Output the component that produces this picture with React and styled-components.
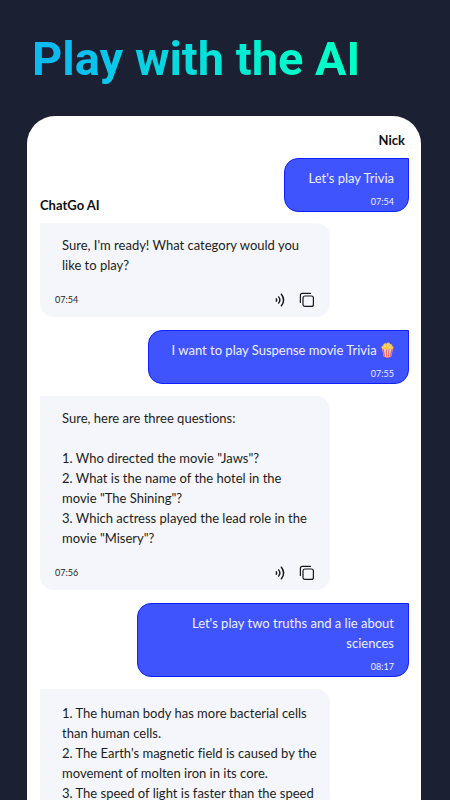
import React from 'react';
import styled, { createGlobalStyle } from 'styled-components';

const GlobalStyle = createGlobalStyle`
  * {
    box-sizing: border-box;
  }

  body {
    margin: 0;
    background: #1b2132;
    font-family: Lato, "Liberation Sans", sans-serif;
    font-variant-ligatures: none;
  }
`;

const Page = styled.div`
  display: flex;
  flex-direction: column;
  height: 100vh;
  padding: 31px 29px 0 27px;
  overflow: hidden;
`;

const Title = styled.h1`
  align-self: flex-start;
  margin: 0 0 29px 5px;
  font-family: Roboto, sans-serif;
  font-size: 47px;
  font-weight: 700;
  line-height: 56px;
  white-space: nowrap;
  color: transparent;
  background: linear-gradient(100deg, #0cbaf2 10%, #00ffc8 85%);
  background-clip: text;
`;

const Chat = styled.main`
  flex: 1;
  min-height: 0;
  display: flex;
  flex-direction: column;
  padding: 15px 12px 0 13px;
  border-radius: 28px 28px 0 0;
  background: #ffffff;
  overflow: hidden;
`;

const Author = styled.span`
  align-self: ${({ $mine }) => ($mine ? 'flex-end' : 'flex-start')};
  margin: ${({ $mine }) => ($mine ? '0 4px 9px 0' : '-28px 0 9px')};
  font-size: 13px;
  font-weight: 700;
  line-height: 18px;
  color: #101014;
`;

const Text = styled.p`
  margin: 0;
  font-size: 13px;
  line-height: 20px;
  white-space: pre-line;
`;

const Time = styled.time`
  font-size: 9px;
  line-height: 16px;
`;

const Sent = styled.article`
  flex-shrink: 0;
  align-self: flex-end;
  display: flex;
  flex-direction: column;
  align-items: flex-end;
  gap: 6px;
  max-width: 272px;
  margin-bottom: 12px;
  padding: 9px 14px 1px 23px;
  border: 1px solid #0f20ff;
  border-radius: 14px 0 14px 14px;
  background: #4054fd;
  color: #eef0ff;
  text-align: right;
`;

const Received = styled.article`
  flex-shrink: 0;
  width: 290px;
  max-width: 100%;
  margin-bottom: 13px;
  padding: ${({ $roomy }) => ($roomy ? '14px 8px 7px 22px' : '12px 15px 7px 22px')};
  border-radius: 0 14px 14px 14px;
  background: #f5f6fb;
  color: #1c1d22;
`;

const Footer = styled.footer`
  display: flex;
  align-items: center;
  height: 20px;
  margin: 15px 0 0 -7px;
`;

const Actions = styled.div`
  display: flex;
  gap: 12px;
  margin-left: auto;
`;

const IconButton = styled.button`
  display: flex;
  padding: 0;
  border: 0;
  background: none;
  color: #17181c;
  cursor: pointer;
`;

const Emoji = styled.svg`
  display: inline-block;
  margin-left: 1px;
  vertical-align: -3px;
`;

const SoundIcon = () => (
  <svg width="16" height="16" viewBox="0 0 16 16" fill="none" stroke="currentColor" strokeLinecap="round">
    <path d="M5.3 6.9q.8 1.1 0 2.2" strokeWidth="1.5" />
    <path d="M7.6 4.9q2.6 3.1 0 6.2" strokeWidth="1.4" />
    <path d="M10.4 2.2q4.4 5.8 0 11.6" strokeWidth="1.5" />
  </svg>
);

const CopyIcon = () => (
  <svg width="16" height="16" viewBox="0 0 16 16" fill="none" stroke="currentColor" strokeWidth="1.2" strokeLinecap="round">
    <rect x="4" y="4" width="10.4" height="10.4" rx="2" />
    <path d="M1.4 10.4V3.2q0-1.8 1.8-1.8h8.2" />
  </svg>
);

const Popcorn = () => (
  <Emoji width="13" height="16" viewBox="0 0 13 16" role="img" aria-label="popcorn">
    <path d="M1 6.4 2.8 14.4Q6.5 16.4 10.2 14.4L12 6.4Z" fill="#f9dfdc" />
    <path d="M1 6.4h2l1.2 8.7-1.4-.7ZM4.6 7h1.2l.2 8.4H5.2ZM7.4 7h1.2l-.7 8.4H7ZM10.2 6.4H12l-1.8 8-1.4.7Z" fill="#e9605f" />
    <g fill="#f8c74f">
      <circle cx="2.4" cy="5.4" r="1.9" />
      <circle cx="4.2" cy="3.2" r="1.9" />
      <circle cx="7.2" cy="2.4" r="2" />
      <circle cx="9.4" cy="3.8" r="1.9" />
      <circle cx="10.8" cy="5.7" r="1.7" />
      <circle cx="6.4" cy="5.6" r="2.3" />
    </g>
    <g fill="#fde5a0">
      <circle cx="4" cy="4.4" r=".8" />
      <circle cx="7" cy="3" r=".8" />
      <circle cx="8.8" cy="5.6" r=".8" />
    </g>
  </Emoji>
);

const SentMessage = ({ time, children }) => (
  <Sent>
    <Text>{children}</Text>
    <Time>{time}</Time>
  </Sent>
);

const ReceivedMessage = ({ time, roomy, children }) => (
  <Received $roomy={roomy}>
    <Text>{children}</Text>
    {time && (
      <Footer>
        <Time>{time}</Time>
        <Actions>
          <IconButton type="button" aria-label="Read aloud"><SoundIcon /></IconButton>
          <IconButton type="button" aria-label="Copy"><CopyIcon /></IconButton>
        </Actions>
      </Footer>
    )}
  </Received>
);

const questions = `Sure, here are three questions:

1. Who directed the movie "Jaws"?
2. What is the name of the hotel in the movie "The Shining"?
3. Which actress played the lead role in the movie "Misery"?`;

const truths = `1. The human body has more bacterial cells than human cells.
2. The Earth's magnetic field is caused by the movement of molten iron in its core.
3. The speed of light is faster than the speed`;

const App = () => (
  <>
    <GlobalStyle />
    <Page>
      <Title>Play with the AI</Title>
      <Chat>
        <Author $mine>Nick</Author>
        <SentMessage time="07:54">Let's play Trivia</SentMessage>
        <Author>ChatGo AI</Author>
        <ReceivedMessage time="07:54">
          Sure, I'm ready! What category would you like to play?
        </ReceivedMessage>
        <SentMessage time="07:55">
          I want to play Suspense movie Trivia <Popcorn />
        </SentMessage>
        <ReceivedMessage time="07:56">{questions}</ReceivedMessage>
        <SentMessage time="08:17">Let's play two truths and a lie about sciences</SentMessage>
        <ReceivedMessage roomy>{truths}</ReceivedMessage>
      </Chat>
    </Page>
  </>
);

export default App;
